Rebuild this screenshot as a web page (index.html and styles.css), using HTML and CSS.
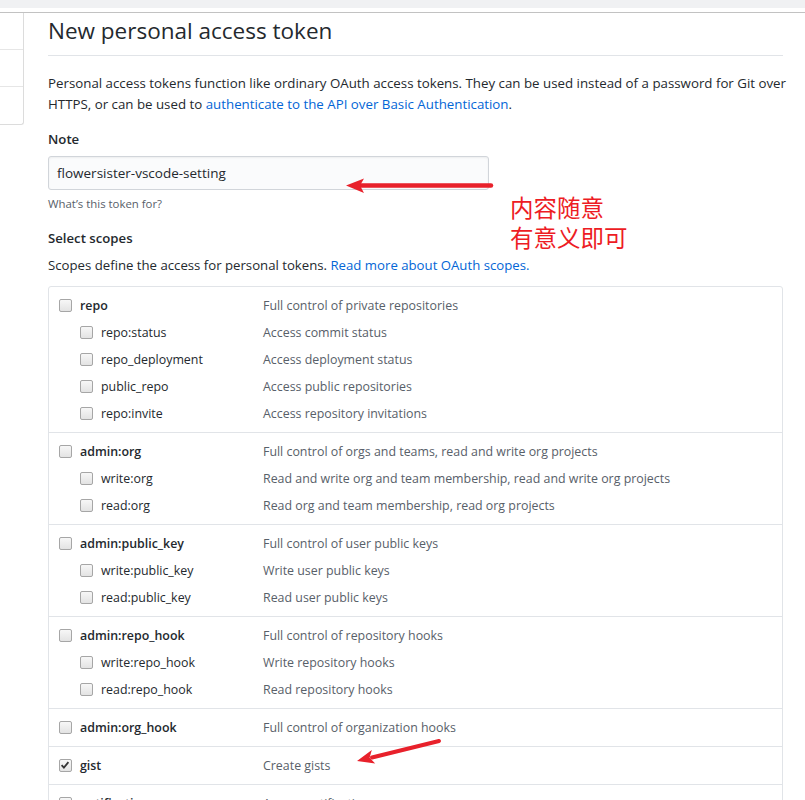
FILE: index.html
```html
<!DOCTYPE html>
<html lang="en">
<head>
<meta charset="utf-8">
<title>New personal access token</title>
<link rel="stylesheet" href="styles.css">
</head>
<body>
<div class="topbar"></div>
<div class="page">
  <aside class="sidebar">
    <div class="side-item"></div>
    <div class="side-item"></div>
    <div class="side-item last"></div>
  </aside>
  <main class="main">
    <h1 class="title">New personal access token</h1>
    <p class="lead">Personal access tokens function like ordinary OAuth access tokens. They can be used instead of a password for Git over<br>HTTPS, or can be used to <a href="#">authenticate to the API over Basic Authentication</a>.</p>
    <label class="field-label">Note</label>
    <div class="input">flowersister-vscode-setting</div>
    <p class="hint">What’s this token for?</p>
    <h3 class="field-label scopes-label">Select scopes</h3>
    <p class="scopes-desc">Scopes define the access for personal tokens. <a href="#">Read more about OAuth scopes.</a></p>

    <div class="scopes">
      <div class="group">
        <div class="row parent"><span class="name"><span class="cb"></span>repo</span><span class="desc">Full control of private repositories</span></div>
        <div class="row child"><span class="name"><span class="cb"></span>repo:status</span><span class="desc">Access commit status</span></div>
        <div class="row child"><span class="name"><span class="cb"></span>repo_deployment</span><span class="desc">Access deployment status</span></div>
        <div class="row child"><span class="name"><span class="cb"></span>public_repo</span><span class="desc">Access public repositories</span></div>
        <div class="row child"><span class="name"><span class="cb"></span>repo:invite</span><span class="desc">Access repository invitations</span></div>
      </div>
      <div class="group">
        <div class="row parent"><span class="name"><span class="cb"></span>admin:org</span><span class="desc">Full control of orgs and teams, read and write org projects</span></div>
        <div class="row child"><span class="name"><span class="cb"></span>write:org</span><span class="desc">Read and write org and team membership, read and write org projects</span></div>
        <div class="row child"><span class="name"><span class="cb"></span>read:org</span><span class="desc">Read org and team membership, read org projects</span></div>
      </div>
      <div class="group">
        <div class="row parent"><span class="name"><span class="cb"></span>admin:public_key</span><span class="desc">Full control of user public keys</span></div>
        <div class="row child"><span class="name"><span class="cb"></span>write:public_key</span><span class="desc">Write user public keys</span></div>
        <div class="row child"><span class="name"><span class="cb"></span>read:public_key</span><span class="desc">Read user public keys</span></div>
      </div>
      <div class="group">
        <div class="row parent"><span class="name"><span class="cb"></span>admin:repo_hook</span><span class="desc">Full control of repository hooks</span></div>
        <div class="row child"><span class="name"><span class="cb"></span>write:repo_hook</span><span class="desc">Write repository hooks</span></div>
        <div class="row child"><span class="name"><span class="cb"></span>read:repo_hook</span><span class="desc">Read repository hooks</span></div>
      </div>
      <div class="group">
        <div class="row parent"><span class="name"><span class="cb"></span>admin:org_hook</span><span class="desc">Full control of organization hooks</span></div>
      </div>
      <div class="group">
        <div class="row parent"><span class="name"><span class="cb checked"><svg viewBox="0 0 12 12" width="12" height="12"><path d="M2.6 6.2 L4.9 8.6 L9.4 3.2" fill="none" stroke="#333" stroke-width="1.8"/></svg></span>gist</span><span class="desc">Create gists</span></div>
      </div>
      <div class="group">
        <div class="row parent"><span class="name"><span class="cb"></span>notifications</span><span class="desc">Access notifications</span></div>
      </div>
    </div>
  </main>
</div>

<div class="note-cn">
  <div class="note-line">内容随意</div>
  <div class="note-line">有意义即可</div>
</div>
<svg class="arrows" width="805" height="800" viewBox="0 0 805 800">
  <line x1="491" y1="185.5" x2="358" y2="185.5" stroke="#e8212b" stroke-width="4.5" stroke-linecap="round"/>
  <polygon points="346,185.5 364,178.5 360,185.5 364,193" fill="#e8212b"/>
  <line x1="439" y1="741" x2="372" y2="757.5" stroke="#e8212b" stroke-width="4" stroke-linecap="round"/>
  <polygon points="357,761 371.8,750 369.6,757.8 375.2,763.6" fill="#e8212b"/>
</svg>
</body>
</html>
```
FILE: styles.css
```css
html, body {
  margin: 0;
  padding: 0;
  background: #fff;
  overflow: hidden;
}
body {
  font-family: "Open Sans", "Noto Sans", sans-serif;
  font-size: 13.2px;
  color: #24292e;
  position: relative;
  width: 805px;
  height: 800px;
}
a { color: #0366d6; text-decoration: none; }

.topbar {
  height: 8px;
  background: #f0f1f3;
  border-bottom: 4px solid #fff;
}
.page {
  display: flex;
  border-top: 1px solid #c2c2c2;
}
.sidebar {
  width: 23px;
  flex: none;
  border-right: 1px solid #dcdcdc;
  border-bottom: 1px solid #dcdcdc;
  border-bottom-right-radius: 3px;
  align-self: flex-start;
}
.side-item {
  height: 36px;
  border-bottom: 1px solid #e6e6e6;
}
.side-item.last { height: 37px; border-bottom: 0; }

.main {
  margin-left: 24px;
  width: 735px;
}
.title {
  margin: 0;
  font-size: 22.5px;
  font-weight: 400;
  line-height: 36px;
  padding-bottom: 6px;
  border-bottom: 1px solid #e1e4e8;
  color: #24292e;
}
.lead {
  margin: 17px 0 0;
  line-height: 21px;
  font-size: 13.3px;
  white-space: nowrap;
}
.field-label {
  display: block;
  margin: 14px 0 0;
  font-size: 13.2px;
  font-weight: 600;
  line-height: 21px;
}
.input {
  margin-top: 6px;
  width: 431px;
  height: 32px;
  box-sizing: content-box;
  border: 1px solid #d1d5da;
  border-radius: 3px;
  background: #fafbfc;
  box-shadow: inset 0 1px 2px rgba(27,31,35,.06);
  padding: 0 0 0 8px;
  line-height: 32px;
  font-size: 13.5px;
  color: #24292e;
}
.hint {
  margin: 5px 0 0;
  font-size: 11.4px;
  line-height: 18px;
  color: #586069;
}
.scopes-label {
  margin-top: 15px;
}
.scopes-desc {
  margin: 6px 0 0;
  line-height: 21px;
}

.scopes {
  margin-top: 10px;
  border: 1px solid #e1e4e8;
  border-radius: 3px;
  font-size: 12.4px;
}
.group {
  padding: 5px 0 5px;
  border-bottom: 1px solid #e1e4e8;
}
.group:last-child { border-bottom: 0; }
.row {
  display: flex;
  align-items: center;
  height: 27px;
}
.name {
  display: flex;
  align-items: center;
  width: 214px;
  flex: none;
  box-sizing: border-box;
  padding-left: 10px;
  color: #24292e;
}
.parent .name { font-weight: 600; }
.child .name { padding-left: 31px; }
.desc { color: #586069; }
.cb {
  width: 11px;
  height: 11px;
  margin-right: 8px;
  border: 1px solid #a6a6a6;
  border-radius: 2px;
  background: linear-gradient(#f7f7f7, #e3e3e3);
  flex: none;
  display: flex;
}
.cb svg { margin: -1px 0 0 -1px; }

.note-cn {
  position: absolute;
  left: 510px;
  top: 192px;
  font-family: "Noto Sans CJK SC", sans-serif;
  font-size: 23.5px;
  color: #ed1c24;
  display: flex;
  flex-direction: column;
}
.note-line {
  height: 30px;
  line-height: 30px;
  overflow: visible;
}
.arrows {
  position: absolute;
  left: 0;
  top: 0;
  pointer-events: none;
}
```
